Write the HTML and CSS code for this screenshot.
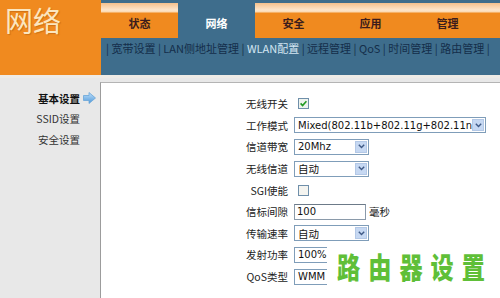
FILE: index.html
```html
<!DOCTYPE html>
<html lang="zh-CN">
<head>
  <meta charset="UTF-8" />
  <meta name="viewport" content="width=device-width, initial-scale=1.0"/>
  <title>网络 - WLAN配置</title>
  <link rel="stylesheet" href="styles.css">
</head>
<body>

  <div class="header">
    <div class="logo">网络</div>
    <div class="nav">
      <ul class="tabs">
        <li>状态</li>
        <li class="active">网络</li>
        <li>安全</li>
        <li>应用</li>
        <li>管理</li>
      </ul>
      <div class="subnav">
        | 宽带设置 | LAN侧地址管理 | <span class="current">WLAN配置</span> | 远程管理 | QoS | 时间管理 | 路由管理 |
      </div>
    </div>
  </div>

  <div class="main">
    <ul class="side">
      <li class="on">基本设置<span class="slot"><svg width="13" height="12" viewBox="0 0 13 12"><defs><linearGradient id="ag" x1="0" y1="0" x2="0" y2="1"><stop offset="0" stop-color="#bfe0fb"/><stop offset="1" stop-color="#4f98d8"/></linearGradient></defs><path d="M0.5 3.5 H6 V0.5 L12.5 6 L6 11.5 V8.5 H0.5 Z" fill="url(#ag)" stroke="#6aa6d8" stroke-width="0.8"/></svg></span></li>
      <li>SSID设置<span class="slot"></span></li>
      <li>安全设置<span class="slot"></span></li>
    </ul>

    <div class="panel">
      <div class="form">
        <label>无线开关</label>
        <div class="ctl">
          <span class="check"><svg width="11" height="11" viewBox="0 0 11 11"><rect x="0.5" y="0.5" width="10" height="10" fill="#eef3ee" stroke="#6f8faa"/><path d="M2.6 5.4 L4.6 7.6 L8.4 3.2" fill="none" stroke="#229a22" stroke-width="1.6"/></svg></span>
        </div>

        <label>工作模式</label>
        <div class="ctl">
          <span class="select wide"><span class="val">Mixed(802.11b+802.11g+802.11n)</span><span class="btn"><svg width="7" height="5" viewBox="0 0 7 5"><path d="M0.8 0.8 L3.5 3.6 L6.2 0.8" fill="none" stroke="#3f5a86" stroke-width="1.4"/></svg></span></span>
        </div>

        <label>信道带宽</label>
        <div class="ctl">
          <span class="select"><span class="val">20Mhz</span><span class="btn"><svg width="7" height="5" viewBox="0 0 7 5"><path d="M0.8 0.8 L3.5 3.6 L6.2 0.8" fill="none" stroke="#3f5a86" stroke-width="1.4"/></svg></span></span>
        </div>

        <label>无线信道</label>
        <div class="ctl">
          <span class="select"><span class="val cjk">自动</span><span class="btn"><svg width="7" height="5" viewBox="0 0 7 5"><path d="M0.8 0.8 L3.5 3.6 L6.2 0.8" fill="none" stroke="#3f5a86" stroke-width="1.4"/></svg></span></span>
        </div>

        <label>SGI使能</label>
        <div class="ctl">
          <span class="check"><svg width="11" height="11" viewBox="0 0 11 11"><rect x="0.5" y="0.5" width="10" height="10" fill="#f4f4f0" stroke="#6f8faa"/></svg></span>
        </div>

        <label>信标间隙</label>
        <div class="ctl">
          <span class="input">100</span><span class="unit">毫秒</span>
        </div>

        <label>传输速率</label>
        <div class="ctl">
          <span class="select"><span class="val cjk">自动</span><span class="btn"><svg width="7" height="5" viewBox="0 0 7 5"><path d="M0.8 0.8 L3.5 3.6 L6.2 0.8" fill="none" stroke="#3f5a86" stroke-width="1.4"/></svg></span></span>
        </div>

        <label>发射功率</label>
        <div class="ctl">
          <span class="select"><span class="val">100%</span><span class="btn"></span></span>
        </div>

        <label>QoS类型</label>
        <div class="ctl">
          <span class="select"><span class="val">WMM</span><span class="btn"></span></span>
        </div>
      </div>

      <div class="watermark"><span>路由器设置</span></div>
    </div>
  </div>

</body>
</html>
```

FILE: styles.css
```css
html, body {
  margin: 0;
  padding: 0;
}

body {
  width: 500px;
  height: 298px;
  overflow: hidden;
  display: flex;
  flex-direction: column;
  font-family: 'Noto Sans CJK SC', 'DejaVu Sans', sans-serif;
  font-size: 10.5px;
  color: #222;
  background-color: #e8e8e8;
}

ul {
  list-style: none;
  margin: 0;
  padding: 0;
}

.header {
  display: flex;
  height: 75px;
  background-color: #3e6d8c;
  border-bottom: 3px solid #eeebe6;
}

.logo {
  width: 101px;
  background-color: #f08a1f;
  color: #fbe6bf;
  font-size: 28px;
  line-height: normal;
  padding: 0 0 0 5px;
  box-sizing: border-box;
  text-shadow: 1px 1px 1px rgba(150, 70, 0, 0.35);
}

.nav {
  flex: 1;
}

.tabs {
  display: flex;
  margin-top: 3px;
  height: 35px;
  background: linear-gradient(#f5c08c 0, #fde6cc 7px, #fcd8ae 9px, #f08a1f 10px, #f08a1f 100%);
}

.tabs li {
  width: 77px;
  padding-top: 8px;
  line-height: 24px;
  text-align: center;
  font-size: 11px;
  font-weight: bold;
  color: #3b1c1c;
}

.tabs li.active {
  background-color: #3e6d8c;
  color: #fff;
}

.subnav {
  margin-top: 2px;
  padding-left: 5px;
  line-height: 16px;
  font-size: 11px;
  color: #142e4a;
  white-space: nowrap;
}

.subnav .current {
  color: #d4e6f2;
}

.main {
  flex: 1;
  display: flex;
}

.side {
  width: 100px;
  padding-top: 10px;
  background-color: #e8e8e8;
}

.side li {
  display: flex;
  justify-content: flex-end;
  align-items: center;
  height: 20.5px;
  padding-right: 4px;
  color: #333;
}

.side li.on {
  font-weight: bold;
  color: #111;
}

.side .slot {
  width: 16px;
  display: flex;
  justify-content: flex-end;
}

.panel {
  position: relative;
  flex: 1;
  margin-top: 4px;
  background-color: #fff;
  border-left: 1px solid #9c9c9c;
  border-top: 1px solid #b4b4b4;
}

.form {
  display: grid;
  grid-template-columns: 187px auto;
  grid-auto-rows: 21.6px;
  column-gap: 6px;
  padding-top: 10px;
  align-items: center;
}

.form label {
  text-align: right;
  color: #222;
}

.ctl {
  display: flex;
  align-items: center;
}

.check {
  display: flex;
  margin-left: 4px;
}

.select {
  display: flex;
  align-items: center;
  width: 75px;
  height: 16px;
  box-sizing: border-box;
  border: 1px solid #7f9db9;
  background-color: #fff;
}

.select.wide {
  width: 192px;
}

.select .val {
  flex: 1;
  overflow: hidden;
  white-space: nowrap;
  padding-left: 3px;
  font-family: 'DejaVu Sans', sans-serif;
  font-size: 10px;
  color: #111;
}

.select .val.cjk {
  font-family: 'Noto Sans CJK SC', sans-serif;
  font-size: 10.5px;
}

.select .btn {
  display: flex;
  align-items: center;
  justify-content: center;
  width: 12px;
  height: 12px;
  margin-right: 1px;
  background-color: #c6d8f2;
  border: 1px solid #b3c8e6;
  box-sizing: border-box;
}

.input {
  width: 72px;
  height: 16px;
  box-sizing: border-box;
  border: 1px solid #8a9aaa;
  border-top-color: #6c7a88;
  padding-left: 2px;
  font-family: 'DejaVu Sans', sans-serif;
  font-size: 10px;
  line-height: 14px;
  color: #111;
}

.unit {
  margin-left: 3px;
}

.watermark {
  position: absolute;
  left: 226px;
  right: 0;
  top: 162px;
  bottom: 0;
  background-color: #fff;
  padding: 6px 0 0 10px;
}

.watermark span {
  display: inline-block;
  font-size: 29px;
  line-height: 1.1;
  font-weight: 900;
  letter-spacing: 10px;
  color: #5fbf38;
  white-space: nowrap;
  transform: scaleX(0.8);
  transform-origin: left top;
}
```
